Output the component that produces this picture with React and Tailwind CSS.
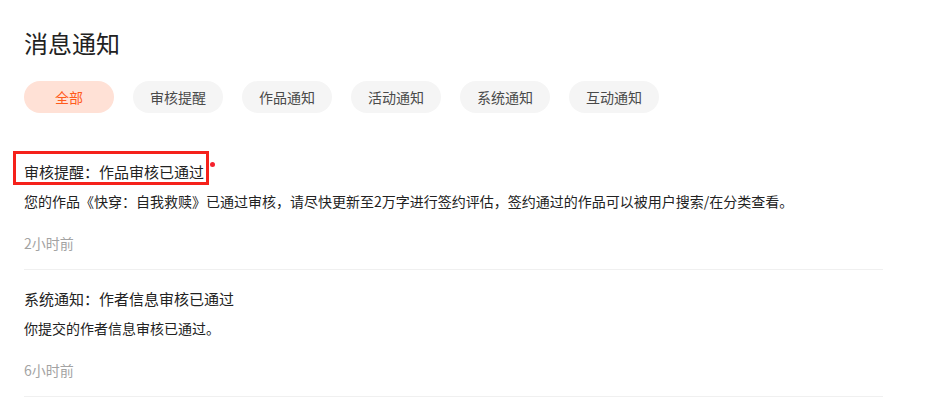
import { useState } from 'react';

const tabs = ['全部', '审核提醒', '作品通知', '活动通知', '系统通知', '互动通知'];

const notices = [
  {
    id: 1,
    title: '审核提醒：作品审核已通过',
    desc: '您的作品《快穿：自我救赎》已通过审核，请尽快更新至2万字进行签约评估，签约通过的作品可以被用户搜索/在分类查看。',
    time: '2小时前',
    unread: true,
  },
  {
    id: 2,
    title: '系统通知：作者信息审核已通过',
    desc: '你提交的作者信息审核已通过。',
    time: '6小时前',
    unread: false,
  },
];

const App = () => {
  const [active, setActive] = useState(0);

  return (
    <div className="min-h-screen bg-white pl-6 pt-[27px] font-['Noto_Sans_CJK_SC','Noto_Sans',sans-serif]">
      <h1 className="text-[24px] leading-8 text-[#222]">消息通知</h1>

      {/* Tabs */}
      <div className="mt-[22px] flex gap-[19px]">
        {tabs.map((t, i) => (
          <button
            key={t}
            onClick={() => setActive(i)}
            className={`h-8 w-[90px] rounded-full text-[14px] leading-8 ${
              i === active ? 'bg-[#ffe1d6] text-[#ff5b1c]' : 'bg-[#f5f5f5] text-[#4a4a4a]'
            }`}
          >
            {t}
          </button>
        ))}
      </div>

      {/* List */}
      <div className="mt-[30px] w-[859px]">
        {notices.map((n) => (
          <div key={n.id} className="border-b border-[#f0f0f0] pt-[18px] pb-[16px]">
            <div className="relative w-fit">
              <p className="text-[15px] leading-[22px] text-[#222]">{n.title}</p>
              {n.unread && (
                <>
                  <span className="absolute left-[186px] top-[1px] h-[5px] w-[5px] rounded-full bg-[#f5222d]" />
                  <span className="pointer-events-none absolute left-[-11px] top-[-10px] h-[34px] w-[196px] border-[3px] border-[#f5211b]" />
                </>
              )}
            </div>
            <p className="mt-[7px] text-[14px] leading-[22px] text-[#222]">{n.desc}</p>
            <p className="mt-[21px] text-[14px] leading-5 text-[#a3a3a3]">{n.time}</p>
          </div>
        ))}
      </div>
    </div>
  );
};

export default App;
